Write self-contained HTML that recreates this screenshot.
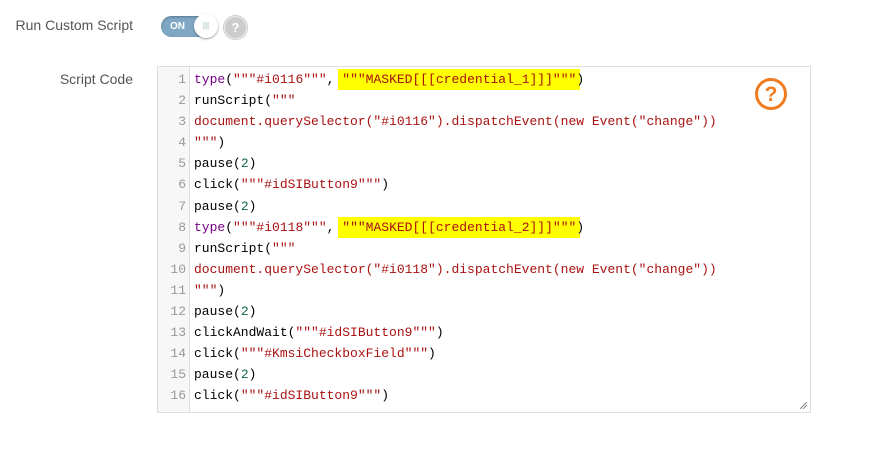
<!DOCTYPE html>
<html><head><style>
body{margin:0;width:872px;height:452px;background:#fff;font-family:"Liberation Sans",sans-serif;position:relative;overflow:hidden}
.lbl{position:absolute;font-size:14px;color:#555;text-align:right;width:133px}
.tog{position:absolute;left:161px;top:16px;width:56px;height:21px;border-radius:11px;background:#7fa7c4;box-shadow:inset 0 1px 2px rgba(0,0,0,.3)}
.tog span{position:absolute;left:9px;top:5px;font-size:10px;line-height:11px;font-weight:bold;color:#fff}
.knob{position:absolute;left:33px;top:-2px;width:24px;height:24px;border-radius:50%;background:#fff;box-shadow:0 1px 2px rgba(0,0,0,.4);text-align:center;font-size:8px;color:#9bb;line-height:24px}
.hq{position:absolute;left:224px;top:16px;width:21px;height:21px;border-radius:50%;background:#ccc;border:1px solid #eee;box-shadow:0 0 0 1px #ccc;color:#fff;font-weight:bold;font-size:13px;text-align:center;line-height:21px}
.ed{position:absolute;left:157px;top:66px;width:652px;height:345px;border:1px solid #ddd;background:#fff}
.gut{position:absolute;left:0;top:0;width:31px;height:345px;background:#f7f7f7;border-right:1px solid #ddd}
.code{position:absolute;left:0;top:2px;font-family:"Liberation Mono",monospace;font-size:13px;line-height:21.1px;white-space:pre}
.ln{display:inline-block;width:28px;text-align:right;color:#999;margin-right:8px}
.k{color:#708}.s{color:#a11}.n{color:#164}.h{background:#ff0;padding:3px 4px;margin:0 -4px}
</style></head><body>
<div class="lbl" style="left:0;top:17px">Run Custom Script</div>
<div class="tog"><span>ON</span><div class="knob">|||</div></div>
<div class="hq">?</div>
<div class="lbl" style="left:0;top:71px">Script Code</div>
<div class="ed"><div class="gut"></div>
<div class="code"><span class="ln">1</span><span class="k">type</span>(<span class="s">"""#i0116"""</span>, <span class="s h">"""MASKED[[[credential_1]]]"""</span>)
<span class="ln">2</span>runScript(<span class="s">"""</span>
<span class="ln">3</span><span class="s">document.querySelector("#i0116").dispatchEvent(new Event("change"))</span>
<span class="ln">4</span><span class="s">"""</span>)
<span class="ln">5</span>pause(<span class="n">2</span>)
<span class="ln">6</span>click(<span class="s">"""#idSIButton9"""</span>)
<span class="ln">7</span>pause(<span class="n">2</span>)
<span class="ln">8</span><span class="k">type</span>(<span class="s">"""#i0118"""</span>, <span class="s h">"""MASKED[[[credential_2]]]"""</span>)
<span class="ln">9</span>runScript(<span class="s">"""</span>
<span class="ln">10</span><span class="s">document.querySelector("#i0118").dispatchEvent(new Event("change"))</span>
<span class="ln">11</span><span class="s">"""</span>)
<span class="ln">12</span>pause(<span class="n">2</span>)
<span class="ln">13</span>clickAndWait(<span class="s">"""#idSIButton9"""</span>)
<span class="ln">14</span>click(<span class="s">"""#KmsiCheckboxField"""</span>)
<span class="ln">15</span>pause(<span class="n">2</span>)
<span class="ln">16</span>click(<span class="s">"""#idSIButton9"""</span>)</div>
<svg style="position:absolute;left:596px;top:10px" width="34" height="34" viewBox="0 0 34 34"><circle cx="17" cy="17" r="14.5" fill="none" stroke="#f07c22" stroke-width="3"/><text x="17" y="24" text-anchor="middle" font-family="Liberation Sans" font-weight="bold" font-size="21" fill="#f07c22">?</text></svg>
<svg style="position:absolute;right:3px;bottom:3px" width="7" height="7"><path d="M0 7L7 0M3 7L7 3" stroke="#888"/></svg>
</div>
</body></html>
